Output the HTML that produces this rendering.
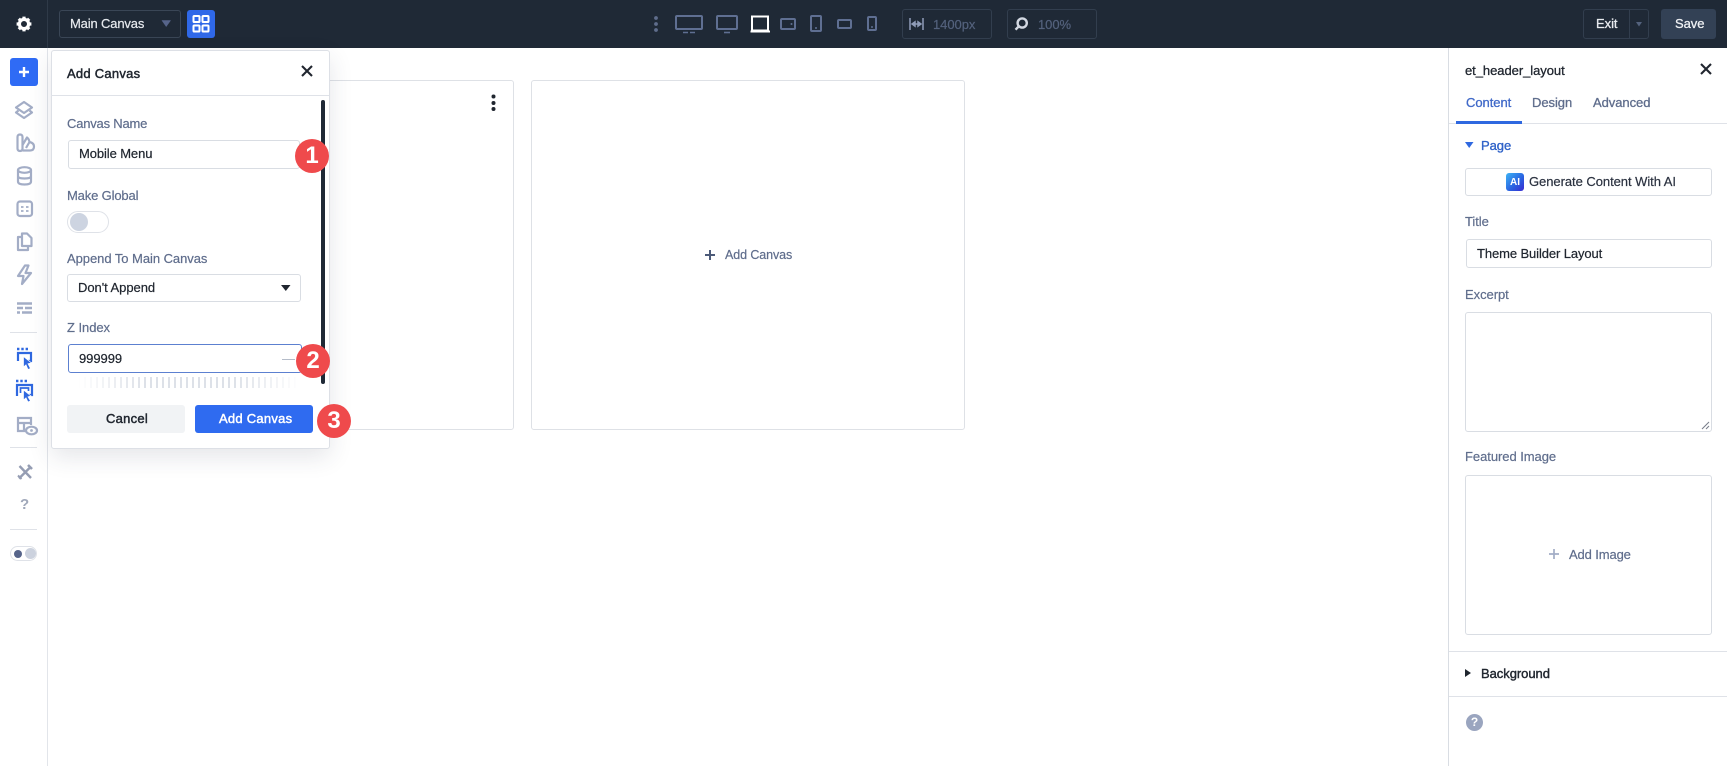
<!DOCTYPE html>
<html><head><meta charset="utf-8"><style>
html,body{margin:0;padding:0;width:1727px;height:766px;overflow:hidden;background:#fff;font-family:"Liberation Sans",sans-serif}
#w{position:absolute;left:0;top:0;width:1727px;height:766px;filter:blur(.3px)}
.a{position:absolute;box-sizing:border-box}
.t{position:absolute;white-space:nowrap;line-height:16px;font-size:13px;letter-spacing:-.05px;-webkit-text-stroke:.2px}
.l{color:#5f6d8c}
.d{color:#20262f}
.m{letter-spacing:.25px;-webkit-text-stroke:.45px}
.box{position:absolute;box-sizing:border-box;background:#fff;border:1px solid #d9dde3;border-radius:3px}
svg{position:absolute;overflow:visible}
.bd{position:absolute;width:34px;height:34px;border-radius:50%;background:#ef4a4c;color:#fff;font-weight:bold;font-size:24px;line-height:33px;text-align:center}
</style></head><body><div id="w">

<!-- top bar -->
<div class="a" style="left:0;top:0;width:1727px;height:48px;background:#1f2936"></div>
<div class="a" style="left:47px;top:0;width:1px;height:48px;background:#2f3a48"></div>
<svg style="left:14px;top:14px" width="20" height="20" viewBox="0 0 20 20"><circle cx="10" cy="10" r="4.6" fill="none" stroke="#fff" stroke-width="3.2"/><g stroke="#fff" stroke-width="3.2"><path d="M10 2.6V5.5M10 14.5V17.4M2.6 10H5.5M14.5 10H17.4M4.8 4.8L6.8 6.8M13.2 13.2L15.2 15.2M15.2 4.8L13.2 6.8M6.8 13.2L4.8 15.2"/></g></svg>
<div class="box" style="left:59px;top:10px;width:122px;height:28px;background:#1f2936;border-color:#3a4656"></div>
<div class="t" style="left:70px;top:16px;color:#e8ebef;letter-spacing:-.15px">Main Canvas</div>
<svg style="left:162px;top:20px" width="9" height="7"><path d="M0 .5H8.5L4.2 6.5Z" fill="#56648a" stroke="#56648a" stroke-width=".6" stroke-linejoin="round"/></svg>
<div class="a" style="left:187px;top:10px;width:28px;height:28px;background:#2f68e8;border-radius:3px"></div>
<svg style="left:192px;top:15px" width="18" height="18" fill="none" stroke="#fff" stroke-width="2"><rect x="1.5" y="1" width="6" height="6" rx=".8"/><rect x="10.5" y="1" width="6" height="6" rx=".8"/><rect x="1.5" y="10.5" width="6" height="6" rx=".8"/><rect x="10.5" y="10.5" width="6" height="6" rx=".8"/></svg>

<svg style="left:654px;top:16px" width="5" height="16" fill="#5f6d8c"><circle cx="2" cy="2" r="1.9"/><circle cx="2" cy="8" r="1.9"/><circle cx="2" cy="14" r="1.9"/></svg>
<svg style="left:675px;top:15px" width="230" height="20" fill="none" stroke="#5f6f92" stroke-width="2">
<rect x="1" y="1" width="26" height="13" rx="1"/><path d="M8 17.5H13M15 17.5H20" stroke-width="1.6"/>
<rect x="42" y="1" width="20" height="13" rx="1"/><path d="M49 17.5H55" stroke-width="1.6"/>
<rect x="77" y="1.5" width="16" height="14" stroke="#fff"/><path d="M75.5 16.5H95" stroke="#fff"/>
<rect x="106" y="4" width="14" height="10" rx="1"/><circle cx="116.5" cy="9" r="1" fill="#5f6f92" stroke="none"/>
<rect x="136" y="1" width="10" height="15" rx="1"/><circle cx="141" cy="13" r="1" fill="#5f6f92" stroke="none"/>
<rect x="163" y="5" width="13" height="8" rx="1"/>
<rect x="193" y="2" width="8" height="13" rx="1"/><circle cx="197" cy="12" r="1" fill="#5f6f92" stroke="none"/>
</svg>
<div class="box" style="left:902px;top:9px;width:90px;height:30px;background:#1f2936;border-color:#323e4e"></div>
<svg style="left:909px;top:17px" width="16" height="14" stroke="#8f9cb8" fill="none" stroke-width="1.5"><path d="M1 1V13M14 1V13M3 7H12"/><path d="M3 7L6 4.8V9.2ZM12 7L9 4.8V9.2Z" fill="#8f9cb8"/></svg>
<div class="t" style="left:933px;top:17px;color:#54627d">1400px</div>
<div class="box" style="left:1007px;top:9px;width:90px;height:30px;background:#1f2936;border-color:#323e4e"></div>
<svg style="left:1014px;top:17px" width="14" height="14" fill="none" stroke="#d3d8e2" stroke-width="2.4"><circle cx="8.2" cy="6" r="4.6"/><path d="M4.8 9.4L1.5 12.7"/></svg>
<div class="t" style="left:1038px;top:17px;color:#54627d">100%</div>

<div class="box" style="left:1583px;top:9px;width:66px;height:30px;background:#1f2936;border-color:#323e4e"></div>
<div class="a" style="left:1629px;top:10px;width:1px;height:28px;background:#323e4e"></div>
<div class="t" style="left:1596px;top:16px;color:#e8ebef;-webkit-text-stroke:.3px">Exit</div>
<svg style="left:1635px;top:22px" width="9" height="6"><path d="M1 0H7L4 4.5Z" fill="#54627d"/></svg>
<div class="a" style="left:1661px;top:9px;width:55px;height:30px;background:#334155;border-radius:3px"></div>
<div class="t" style="left:1675px;top:16px;color:#eef0f3;-webkit-text-stroke:.3px">Save</div>

<!-- left sidebar -->
<div class="a" style="left:47px;top:48px;width:1px;height:718px;background:#e2e5ea"></div>
<div class="a" style="left:10px;top:58px;width:28px;height:28px;background:#2f6bf5;border-radius:3px"></div>
<svg style="left:18px;top:66px" width="12" height="12" stroke="#fff" stroke-width="2.4"><path d="M6 1V11M1 6H11"/></svg>
<svg style="left:14px;top:100px" width="20" height="20" fill="none" stroke="#a3adc6" stroke-width="2.2" stroke-linejoin="round"><path d="M10 2L18 7.5L10 13L2 7.5Z"/><path d="M4.5 10.5L2 12.5L10 18L18 12.5L15.5 10.5"/></svg>
<svg style="left:16px;top:133px" width="20" height="20" fill="none" stroke="#a3adc6" stroke-width="2.2" stroke-linejoin="round"><path d="M1.5 4Q1.5 1.5 4 1.5Q6.5 1.5 6.5 4V15.5Q6.5 18 4 18Q1.5 18 1.5 15.5Z"/><path d="M6.5 12L11 4.5Q13 6 13.5 9L10 15"/><path d="M6.5 17.5H14Q18 17.5 18 13.5Q18 10 13.5 9"/></svg>
<svg style="left:16px;top:166px" width="18" height="20" fill="none" stroke="#a3adc6" stroke-width="2.2"><ellipse cx="8.5" cy="4" rx="6.5" ry="2.8"/><path d="M2 4V15.5Q2 18.5 8.5 18.5Q15 18.5 15 15.5V4M2 10Q2 12.5 8.5 12.5Q15 12.5 15 10"/></svg>
<svg style="left:16px;top:200px" width="18" height="18" fill="none" stroke="#a3adc6" stroke-width="2.2"><rect x="1.5" y="1.5" width="14.5" height="14.5" rx="2.5"/><path d="M5 7H7.5M10 7H12.5M5 11H7.5M10 11H12.5" stroke-width="1.8"/></svg>
<svg style="left:16px;top:232px" width="18" height="20" fill="none" stroke="#a3adc6" stroke-width="2.2" stroke-linejoin="round"><path d="M6 1.5H11L15.5 6V14H6Z"/><path d="M6 5H2V18H12V14"/></svg>
<svg style="left:16px;top:264px" width="18" height="22" fill="none" stroke="#a3adc6" stroke-width="2.2" stroke-linejoin="round"><path d="M9 1.5L2 12H7.5L6 20L15 9H9.5L12.5 1.5Z"/></svg>
<svg style="left:17px;top:302px" width="15" height="13" stroke="#a3adc6" stroke-width="2.4"><path d="M0 1.5H15M0 6H6M8 6H15M0 10.5H3M5 10.5H15"/></svg>
<div class="a" style="left:10px;top:332px;width:27px;height:1px;background:#dfe2e8"></div>
<svg style="left:16px;top:348px" width="18" height="22" fill="none" stroke="#2f68e0" stroke-width="2.2"><path d="M1 1H3.4M5.3 1H7.7M9.6 1H12" stroke-width="2.4"/><path d="M2 13V5H15V13H9"/><path d="M7.5 8.5L15.5 15L12 15.8L14.5 20.5L12 21.5L10 16.8L7.5 19Z" fill="#2f68e0" stroke="#fff" stroke-width=".7"/></svg>
<svg style="left:15px;top:380px" width="20" height="22" fill="none" stroke="#2f68e0" stroke-width="2.2"><path d="M1 1H3.4M5.3 1H7.7M9.6 1H12" stroke-width="2.4"/><path d="M2 16V5H17V15H11"/><path d="M5.5 13V8H13.5V11" stroke-width="1.7"/><path d="M8.5 10L16 16L13 16.8L15.5 21L13 22L11 17.8L8.5 20Z" fill="#2f68e0" stroke="#fff" stroke-width=".7"/></svg>
<svg style="left:16px;top:416px" width="22" height="20" fill="none" stroke="#a3adc6" stroke-width="2.2"><path d="M10 15H2V2H15V9M2 7H15M8 7V15"/><ellipse cx="15.5" cy="14.5" rx="5.5" ry="3.8" fill="#fff"/><circle cx="15.5" cy="14.5" r="1.4" fill="#a3adc6" stroke="none"/></svg>
<div class="a" style="left:10px;top:447px;width:27px;height:1px;background:#dfe2e8"></div>
<svg style="left:17px;top:464px" width="16" height="16" fill="none" stroke="#959db3" stroke-width="2.4"><path d="M2 14.5L13 3.5M2.5 2L14 14"/><path d="M11 1L15 5" stroke-width="2.6"/><path d="M1 11.5L4.5 15" stroke-width="2"/></svg>
<div class="t" style="left:20px;top:497px;color:#a0a8ba;font-size:15px;font-weight:bold;-webkit-text-stroke:0">?</div>
<div class="a" style="left:10px;top:529px;width:27px;height:1px;background:#dfe2e8"></div>
<div class="a" style="left:10px;top:546px;width:27px;height:15px;border:1px solid #dfe2e8;border-radius:8px"></div>
<div class="a" style="left:14px;top:550px;width:8px;height:8px;border-radius:50%;background:#56648a"></div>
<div class="a" style="left:25px;top:548px;width:11px;height:11px;border-radius:50%;background:#ccd2de"></div>

<!-- canvases -->
<div class="box" style="left:100px;top:80px;width:414px;height:350px;border-width:1.5px;border-color:#dee1e6"></div>
<svg style="left:491px;top:94px" width="5" height="17" fill="#20262f"><circle cx="2.5" cy="2.5" r="2"/><circle cx="2.5" cy="9" r="2"/><circle cx="2.5" cy="15" r="2"/></svg>
<div class="box" style="left:531px;top:80px;width:434px;height:350px;border-width:1.5px;border-color:#dee1e6"></div>
<svg style="left:705px;top:250px" width="10" height="10" stroke="#4c5a78" stroke-width="2"><path d="M5 0V10M0 5H10"/></svg>
<div class="t l" style="left:725px;top:247px;font-size:12.5px;letter-spacing:-.1px">Add Canvas</div>

<!-- popup -->
<div class="box" style="left:51px;top:50px;width:279px;height:399px;border-color:#dde0e6;box-shadow:0 8px 24px rgba(40,50,70,.12)"></div>
<div class="a" style="left:51px;top:95px;width:278px;height:1px;background:#dfe2e8"></div>
<div class="t d m" style="left:67px;top:66px">Add Canvas</div>
<svg style="left:301px;top:65px" width="12" height="12" stroke="#20262f" stroke-width="2.1"><path d="M1 1L11 11M11 1L1 11"/></svg>
<div class="a" style="left:321px;top:100px;width:4px;height:284px;background:#1f2936;border-radius:2px"></div>
<div class="t l" style="left:67px;top:116px;letter-spacing:-.2px">Canvas Name</div>
<div class="box" style="left:68px;top:140px;width:232px;height:29px"></div>
<div class="t d" style="left:79px;top:146px;letter-spacing:-.1px">Mobile Menu</div>
<div class="bd" style="left:295px;top:139px">1</div>
<div class="t l" style="left:67px;top:187px;letter-spacing:-.15px;margin-top:1px">Make Global</div>
<div class="a" style="left:67px;top:211px;width:42px;height:22px;border:1px solid #dfe2e8;border-radius:11px;background:#fff"></div>
<div class="a" style="left:70px;top:213px;width:18px;height:18px;border-radius:50%;background:#cdd4e1"></div>
<div class="t l" style="left:67px;top:250px;margin-top:1px">Append To Main Canvas</div>
<div class="box" style="left:67px;top:274px;width:234px;height:28px"></div>
<div class="t d" style="left:78px;top:280px">Don't Append</div>
<svg style="left:281px;top:285px" width="10" height="7"><path d="M0 0H9.5L4.8 6Z" fill="#20262f"/></svg>
<div class="t l" style="left:67px;top:320px">Z Index</div>
<div class="box" style="left:68px;top:344px;width:234px;height:29px;border-color:#5c80d0;border-width:1.5px"></div>
<div class="t d" style="left:79px;top:351px">999999</div>
<div class="a" style="left:282px;top:359px;width:13px;height:1px;background:#b5bcc9"></div>
<div class="a" style="left:78px;top:377px;width:222px;height:11px;background:repeating-linear-gradient(90deg,#dde1e8 0 2px,transparent 2px 6px);-webkit-mask-image:linear-gradient(90deg,transparent,#000 30%,#000 70%,transparent);mask-image:linear-gradient(90deg,transparent,#000 30%,#000 70%,transparent)"></div>
<div class="bd" style="left:296px;top:344px">2</div>
<div class="a" style="left:67px;top:405px;width:118px;height:28px;background:#f1f3f5;border-radius:3px"></div>
<div class="t d m" style="left:106px;top:411px">Cancel</div>
<div class="a" style="left:195px;top:405px;width:118px;height:28px;background:#2f6bf0;border-radius:3px"></div>
<div class="t m" style="left:219px;top:411px;color:#fff">Add Canvas</div>
<div class="bd" style="left:317px;top:404px">3</div>

<!-- right panel -->
<div class="a" style="left:1448px;top:48px;width:1px;height:718px;background:#d9dde3"></div>
<div class="t d" style="left:1465px;top:63px;-webkit-text-stroke:.3px">et_header_layout</div>
<svg style="left:1700px;top:63px" width="12" height="12" stroke="#20262f" stroke-width="2.1"><path d="M1 1L11 11M11 1L1 11"/></svg>
<div class="a" style="left:1449px;top:123px;width:278px;height:1px;background:#dfe2e8"></div>
<div class="a" style="left:1456px;top:121px;width:66px;height:3px;background:#2f68e0"></div>
<div class="t" style="left:1466px;top:95px;color:#3f68c8;-webkit-text-stroke:.3px">Content</div>
<div class="t l" style="left:1532px;top:95px;-webkit-text-stroke:.3px">Design</div>
<div class="t l" style="left:1593px;top:95px;-webkit-text-stroke:.3px">Advanced</div>
<svg style="left:1465px;top:142px" width="9" height="7"><path d="M0 0H8.5L4.2 6Z" fill="#2f68e0"/></svg>
<div class="t" style="left:1481px;top:138px;color:#2f62c8;-webkit-text-stroke:.35px">Page</div>
<div class="box" style="left:1465px;top:168px;width:247px;height:28px"></div>
<div class="a" style="left:1506px;top:173px;width:18px;height:18px;border-radius:3px;background:linear-gradient(135deg,#3cb4f5,#2a5fe0 60%,#3a2bd0)"></div>
<div class="a" style="left:1506px;top:174px;width:18px;height:18px;color:#fff;font-size:10px;font-weight:bold;line-height:18px;text-align:center">AI</div>
<div class="t d" style="left:1529px;top:174px;color:#2b3240">Generate Content With AI</div>
<div class="t l" style="left:1465px;top:214px">Title</div>
<div class="box" style="left:1466px;top:239px;width:246px;height:29px"></div>
<div class="t d" style="left:1477px;top:246px;letter-spacing:-.1px">Theme Builder Layout</div>
<div class="t l" style="left:1465px;top:287px">Excerpt</div>
<div class="box" style="left:1465px;top:312px;width:247px;height:120px"></div>
<svg style="left:1701px;top:421px" width="9" height="9" stroke="#7a808c" stroke-width="1.1"><path d="M1 8L8 1M5 8L8 5"/></svg>
<div class="t l" style="left:1465px;top:449px">Featured Image</div>
<div class="box" style="left:1465px;top:475px;width:247px;height:160px"></div>
<svg style="left:1549px;top:549px" width="10" height="10" stroke="#a3adc6" stroke-width="1.7"><path d="M5 0V10M0 5H10"/></svg>
<div class="t l" style="left:1569px;top:547px;letter-spacing:-.12px">Add Image</div>
<div class="a" style="left:1449px;top:651px;width:278px;height:1px;background:#dfe2e8"></div>
<svg style="left:1465px;top:669px" width="7" height="9"><path d="M0 0V8L6 4Z" fill="#20262f"/></svg>
<div class="t d" style="left:1481px;top:666px;-webkit-text-stroke:.4px">Background</div>
<div class="a" style="left:1449px;top:696px;width:278px;height:1px;background:#dfe2e8"></div>
<div class="a" style="left:1466px;top:714px;width:17px;height:17px;border-radius:50%;background:#9aa5bf;color:#fff;font-size:12px;font-weight:bold;line-height:17px;text-align:center">?</div>
</div></body></html>
